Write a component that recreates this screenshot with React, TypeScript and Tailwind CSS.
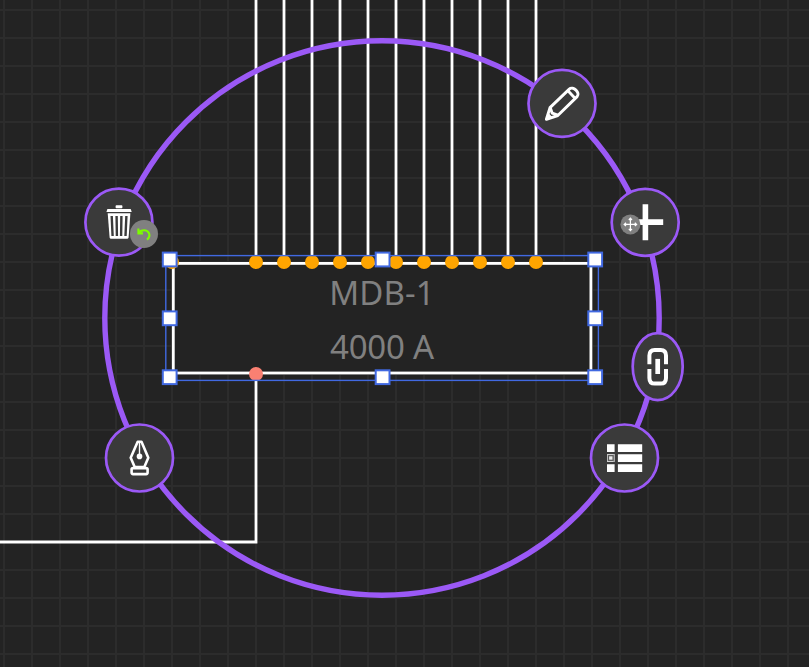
import type { ReactNode } from 'react';

const feeders = [256, 284, 312, 340, 368, 396, 424, 452, 480, 508, 536];
const gridX = Array.from({ length: 29 }, (_, i) => 4 + i * 28);
const gridY = Array.from({ length: 24 }, (_, i) => 10 + i * 28);
const handles = [
  [169.7, 259.5], [382.6, 259.5], [595.2, 259.5],
  [169.7, 318.3], [595.2, 318.3],
  [169.7, 377.2], [382.6, 377.2], [595.2, 377.2],
];

function Diagram() {
  return (
    <svg className="absolute inset-0" width="809" height="667" viewBox="0 0 809 667" fill="none">
      <g stroke="#2c2c2c" strokeWidth="2">
        {gridX.map((x) => <path key={x} d={`M${x} 0V667`} />)}
        {gridY.map((y) => <path key={y} d={`M0 ${y}H809`} />)}
      </g>
      <g stroke="#fff" strokeWidth="2.8">
        {feeders.map((x) => <path key={x} d={`M${x} 0V262`} />)}
        <path d="M256 374V542H0" />
        <rect x="173.3" y="263.4" width="417.6" height="109.6" fill="#232323" />
      </g>
      <g fill="#ffa500">
        {[172, ...feeders].map((x) => <circle key={x} cx={x} cy="262" r="7" />)}
      </g>
      <circle cx="256" cy="374" r="7" fill="#fa8072" />
      <rect x="165.8" y="255.6" width="432.6" height="124.8" stroke="#4169e1" strokeWidth="1.4" />
      <g fill="#fff" stroke="#4169e1" strokeWidth="2">
        {handles.map(([x, y]) => <rect key={`${x}-${y}`} x={x - 6.9} y={y - 6.9} width="13.8" height="13.8" />)}
      </g>
      <circle cx="382" cy="318" r="277.2" stroke="#9b59f6" strokeWidth="5.4" />
    </svg>
  );
}

type ToolProps = { label: string; place: string; rx?: number; dx?: number; dy?: number; children: ReactNode };

function Tool({ label, place, rx = 33.5, dx = 0, dy = 0, children }: ToolProps) {
  return (
    <button aria-label={label} className={`absolute size-[70px] rounded-full ${place}`}>
      <svg className="block overflow-visible" width="70" height="70" viewBox="-35 -35 70 70" fill="none">
        <g transform={`translate(${dx} ${dy})`}>
          <ellipse rx={rx} ry="33.5" fill="#3a3a3a" stroke="#9b59f6" strokeWidth="2.7" />
          {children}
        </g>
      </svg>
    </button>
  );
}

export default function App() {
  return (
    <main className="relative h-[667px] w-[809px] overflow-hidden bg-[#232323]">
      <Diagram />
      <div className="absolute left-[173px] top-[266px] flex h-[108px] w-[418px] flex-col items-center font-['Noto_Sans',sans-serif] text-[33px] leading-[54px] text-[#808080]">
        <span className="tracking-[0.1px]">MDB-1</span>
        <span className="tracking-[-0.2px]">4000 A</span>
      </div>

      <Tool label="Edit" dy={0.4} place="left-[527px] top-[68px]">
        <g stroke="#fff" strokeWidth="2.9" strokeLinejoin="round">
          <path d="M-15.6 15.9L-12 4.2L7.3 -14.3C11 -17.8 18.8 -10.5 15.1 -6.8L-4.2 12.1Z" />
          <path d="M5.7 -12.8L12.8 -5.5M-11.7 4.2L-9.8 9.8L-4.2 11.8" />
        </g>
        <path d="M-16.5 16.8L-13.5 9.5L-9.5 13.8Z" fill="#fff" />
      </Tool>

      <Tool label="Add" dx={0.2} dy={0.3} place="left-[610px] top-[187px]">
        <path d="M-18 -0.2H18M0.2 -18V18" stroke="#fff" strokeWidth="5.6" />
        <circle cx="-14.8" cy="2.1" r="10" fill="#808080" />
        <path d="M-21 2.1H-8.6M-14.8 -4.1V8.3M-19.2 .5L-21 2.1L-19.2 3.7M-10.4 .5L-8.6 2.1L-10.4 3.7M-16.4 -2.3L-14.8 -4.1L-13.2 -2.3M-16.4 6.5L-14.8 8.3L-13.2 6.5" stroke="#fff" strokeWidth="1.2" />
      </Tool>

      <Tool label="Connect" rx={25} dx={-0.3} dy={-0.4} place="left-[623px] top-[332px]">
        <path d="M-8.3 -2.4V-11Q-8.3 -16.7 -3 -16.7H3Q8.3 -16.7 8.3 -11V-2.4M-8.3 2.4V11.3Q-8.3 17 -3 17H3Q8.3 17 8.3 11.3V2.4" stroke="#fff" strokeWidth="4" />
        <path d="M0 -7.7V7.4" stroke="#fff" strokeWidth="4.7" />
      </Tool>

      <Tool label="Properties" dx={0.5} place="left-[589px] top-[423px]">
        <path d="M-17.5 -13.8h7.6v7.7h-7.6zM-6.6 -13.8h24.3v7.7h-24.3zM-17.5 -3.8h7.6v7.7h-7.6zM-6.6 -3.8h24.3v7.7h-24.3zM-17.5 6.3h7.6v7.7h-7.6zM-6.6 6.3h24.3v7.7h-24.3z" fill="#fff" />
        <path d="M-17.5 -3.8h7.6v7.7h-7.6z" fill="#ccc" />
        <path d="M-11 -3.8h1.1v7.7h-1.1z" fill="#999" />
        <rect x="-16" y="-2.3" width="4.6" height="4.6" fill="#eee" stroke="#555" strokeWidth="1.2" />
      </Tool>

      <Tool label="Draw" dx={0.5} place="left-[104px] top-[423px]">
        <g stroke="#fff" strokeWidth="2.6" strokeLinejoin="round">
          <path d="M-1.8 -16.2H2L8.8 -0.2L4.8 9H-4.8L-8.8 -0.2Z" />
          <rect x="-7.9" y="10.1" width="16" height="6" rx="1.5" />
        </g>
        <path d="M0 -16V-2" stroke="#fff" strokeWidth="1.4" />
        <circle cx="0" cy="-1.6" r="2.8" fill="#fff" />
      </Tool>

      <Tool label="Delete" dx={-0.1} dy={0.2} place="left-[84px] top-[187px]">
        <g fill="#fff">
          <rect x="-3.3" y="-17" width="6.8" height="3" rx=".8" />
          <path d="M-11.5 -13.3H11.8L12.8 -10.3H-12.5Z" />
          <path d="M-11.2 -9H11.5L9.7 15.4Q9.6 16.5 8.6 16.5H-8.2Q-9.2 16.5 -9.3 15.4Z" />
        </g>
        <path d="M-7.2 -6.2L-6.3 13.8M-2.3 -6.2L-2 13.8M2.5 -6.2L2.2 13.8M7.5 -6.2L6.6 13.8" stroke="#3a3a3a" strokeWidth="2.4" />
      </Tool>
      <span className="absolute left-[130px] top-[220px] flex size-7 items-center justify-center rounded-full bg-[#808080]">
        <svg width="28" height="28" viewBox="-14 -14 28 28" fill="none" stroke="#7cfc00" strokeWidth="2.1">
          <path d="M-5.6 -5.5V-0.6H-1M-5.6 -0.8C-3 -4.6 3.2 -4.8 5 -0.8Q6.4 3 3 5.6" />
        </svg>
      </span>
    </main>
  );
}
